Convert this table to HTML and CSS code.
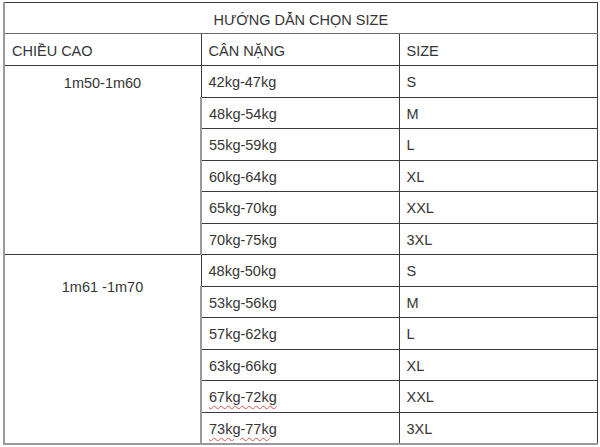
FILE: index.html
```html
<!DOCTYPE html>
<html lang="vi">
<head>
<meta charset="utf-8">
<title>Hướng dẫn chọn size</title>
<link rel="stylesheet" href="styles.css">
</head>
<body>
<table class="size-table">
  <colgroup>
    <col class="col-a">
    <col class="col-b">
    <col class="col-c">
  </colgroup>
  <tr class="row-title"><td colspan="3" class="title">HƯỚNG DẪN CHỌN SIZE</td></tr>
  <tr class="row-head"><td>CHIỀU CAO</td><td>CÂN NẶNG</td><td>SIZE</td></tr>
  <tr class="row"><td rowspan="6" class="height-cell">1m50-1m60</td><td>42kg-47kg</td><td>S</td></tr>
  <tr class="row"><td>48kg-54kg</td><td>M</td></tr>
  <tr class="row"><td>55kg-59kg</td><td>L</td></tr>
  <tr class="row"><td>60kg-64kg</td><td>XL</td></tr>
  <tr class="row"><td>65kg-70kg</td><td>XXL</td></tr>
  <tr class="row"><td>70kg-75kg</td><td>3XL</td></tr>
  <tr class="row"><td rowspan="6" class="height-cell height-cell-low">1m61 -1m70</td><td>48kg-50kg</td><td>S</td></tr>
  <tr class="row"><td>53kg-56kg</td><td>M</td></tr>
  <tr class="row"><td>57kg-62kg</td><td>L</td></tr>
  <tr class="row"><td>63kg-66kg</td><td>XL</td></tr>
  <tr class="row"><td><span class="spell">67kg-72kg</span></td><td>XXL</td></tr>
  <tr class="row"><td><span class="spell">73kg-77kg</span></td><td>3XL</td></tr>
</table>
</body>
</html>
```

FILE: styles.css
```css
html, body {
  margin: 0;
  padding: 0;
  background: #ffffff;
}

body {
  font-family: "Liberation Sans", Arial, sans-serif;
  font-size: 14.5px;
  color: #353535;
}

.size-table {
  margin: 2px 0 0 3px;
  width: 593px;
  table-layout: fixed;
  border-collapse: collapse;
  border-top: 1px solid #3a3a3a;
  border-right: 1px solid #3a3a3a;
  border-left: 2px solid #9a9a9a;
  border-bottom: 2px solid #9a9a9a;
}

.col-a { width: 197px; }
.col-b { width: 198px; }
.col-c { width: 198px; }

.size-table td {
  border: 1px solid #3a3a3a;
  padding: 2px 7px 0 7px;
  text-align: left;
  vertical-align: middle;
  white-space: nowrap;
  line-height: 16px;
}

.size-table tr > td:first-child {
  border-left: 2px solid #9a9a9a;
}

.size-table tr:last-child > td,
.size-table .height-cell-low {
  border-bottom: 2px solid #9a9a9a;
}

.row-title { height: 31px; }
.row-head { height: 32px; }
.row { height: 31.5px; }

.size-table .title {
  text-align: center;
  padding-top: 4px;
  border-bottom-color: #6a6a6a;
}

.size-table .height-cell {
  text-align: center;
  vertical-align: top;
  padding-top: 9px;
}

.size-table .height-cell-low {
  padding-top: 24px;
}

.spell {
  text-decoration: underline wavy #e05050;
  text-decoration-thickness: 1px;
  text-underline-offset: 3px;
}
```
